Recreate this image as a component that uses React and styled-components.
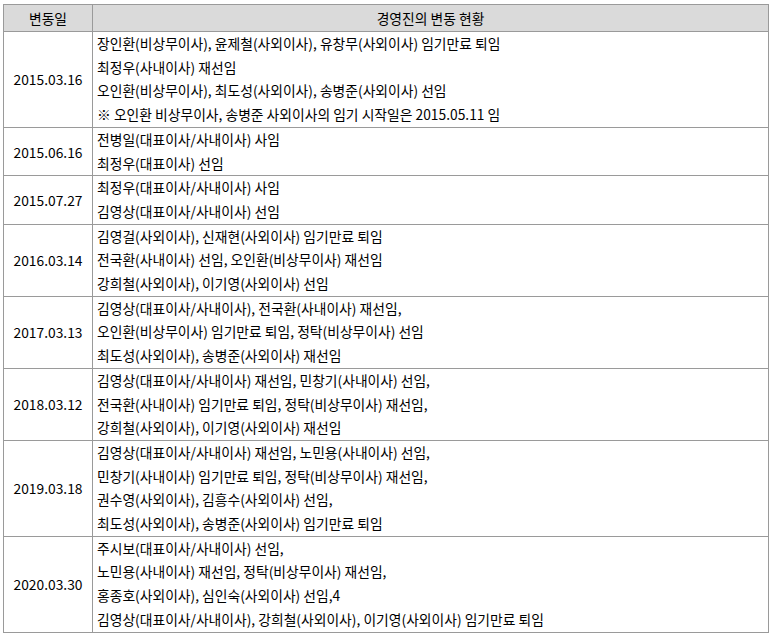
import styled, { createGlobalStyle } from 'styled-components';

const rows = [
  {
    date: '2015.03.16',
    lines: [
      '장인환(비상무이사), 윤제철(사외이사), 유창무(사외이사) 임기만료 퇴임',
      '최정우(사내이사) 재선임',
      '오인환(비상무이사), 최도성(사외이사), 송병준(사외이사) 선임',
      '※ 오인환 비상무이사, 송병준 사외이사의 임기 시작일은 2015.05.11 임',
    ],
  },
  {
    date: '2015.06.16',
    lines: ['전병일(대표이사/사내이사) 사임', '최정우(대표이사) 선임'],
  },
  {
    date: '2015.07.27',
    lines: ['최정우(대표이사/사내이사) 사임', '김영상(대표이사/사내이사) 선임'],
  },
  {
    date: '2016.03.14',
    lines: [
      '김영걸(사외이사), 신재현(사외이사) 임기만료 퇴임',
      '전국환(사내이사) 선임, 오인환(비상무이사) 재선임',
      '강희철(사외이사), 이기영(사외이사) 선임',
    ],
  },
  {
    date: '2017.03.13',
    lines: [
      '김영상(대표이사/사내이사), 전국환(사내이사) 재선임,',
      '오인환(비상무이사) 임기만료 퇴임, 정탁(비상무이사) 선임',
      '최도성(사외이사), 송병준(사외이사) 재선임',
    ],
  },
  {
    date: '2018.03.12',
    lines: [
      '김영상(대표이사/사내이사) 재선임, 민창기(사내이사) 선임,',
      '전국환(사내이사) 임기만료 퇴임, 정탁(비상무이사) 재선임,',
      '강희철(사외이사), 이기영(사외이사) 재선임',
    ],
  },
  {
    date: '2019.03.18',
    lines: [
      '김영상(대표이사/사내이사) 재선임, 노민용(사내이사) 선임,',
      '민창기(사내이사) 임기만료 퇴임, 정탁(비상무이사) 재선임,',
      '권수영(사외이사), 김흥수(사외이사) 선임,',
      '최도성(사외이사), 송병준(사외이사) 임기만료 퇴임',
    ],
  },
  {
    date: '2020.03.30',
    lines: [
      '주시보(대표이사/사내이사) 선임,',
      '노민용(사내이사) 재선임, 정탁(비상무이사) 재선임,',
      '홍종호(사외이사), 심인숙(사외이사) 선임,4',
      '김영상(대표이사/사내이사), 강희철(사외이사), 이기영(사외이사) 임기만료 퇴임',
    ],
  },
];

export default function App() {
  return (
    <>
      <GlobalStyle />
      <Table>
        <thead>
          <tr>
            <HeadCell $width="88px">변동일</HeadCell>
            <HeadCell>경영진의 변동 현황</HeadCell>
          </tr>
        </thead>
        <tbody>
          {rows.map((row) => (
            <tr key={row.date}>
              <DateCell>{row.date}</DateCell>
              <TextCell>
                {row.lines.map((line, i) => (
                  <Line key={i}>{line}</Line>
                ))}
              </TextCell>
            </tr>
          ))}
        </tbody>
      </Table>
    </>
  );
}

const GlobalStyle = createGlobalStyle`
  body {
    margin: 4px 0 0 3px;
    background: #fff;
    font-family: "Noto Sans CJK KR", "Noto Sans", sans-serif;
    color: #000;
  }
`;

const Table = styled.table`
  width: 766px;
  border-collapse: collapse;
  border: 1px solid #000;
  font-size: 13.8px;
  table-layout: fixed;
`;

const HeadCell = styled.th`
  width: ${(p) => p.$width || 'auto'};
  height: 26px;
  padding: 0;
  background: #dadada;
  border: 1px solid #9a9a9a;
  font-weight: normal;
  text-align: center;
  vertical-align: middle;
  line-height: 26px;
`;

const DateCell = styled.td`
  padding: 0;
  border: 1px solid #9a9a9a;
  text-align: center;
  vertical-align: middle;
`;

const TextCell = styled.td`
  padding: 0 4px;
  border: 1px solid #9a9a9a;
  text-align: left;
  vertical-align: middle;
`;

const Line = styled.div`
  line-height: 23.7px;
  white-space: nowrap;
`;
